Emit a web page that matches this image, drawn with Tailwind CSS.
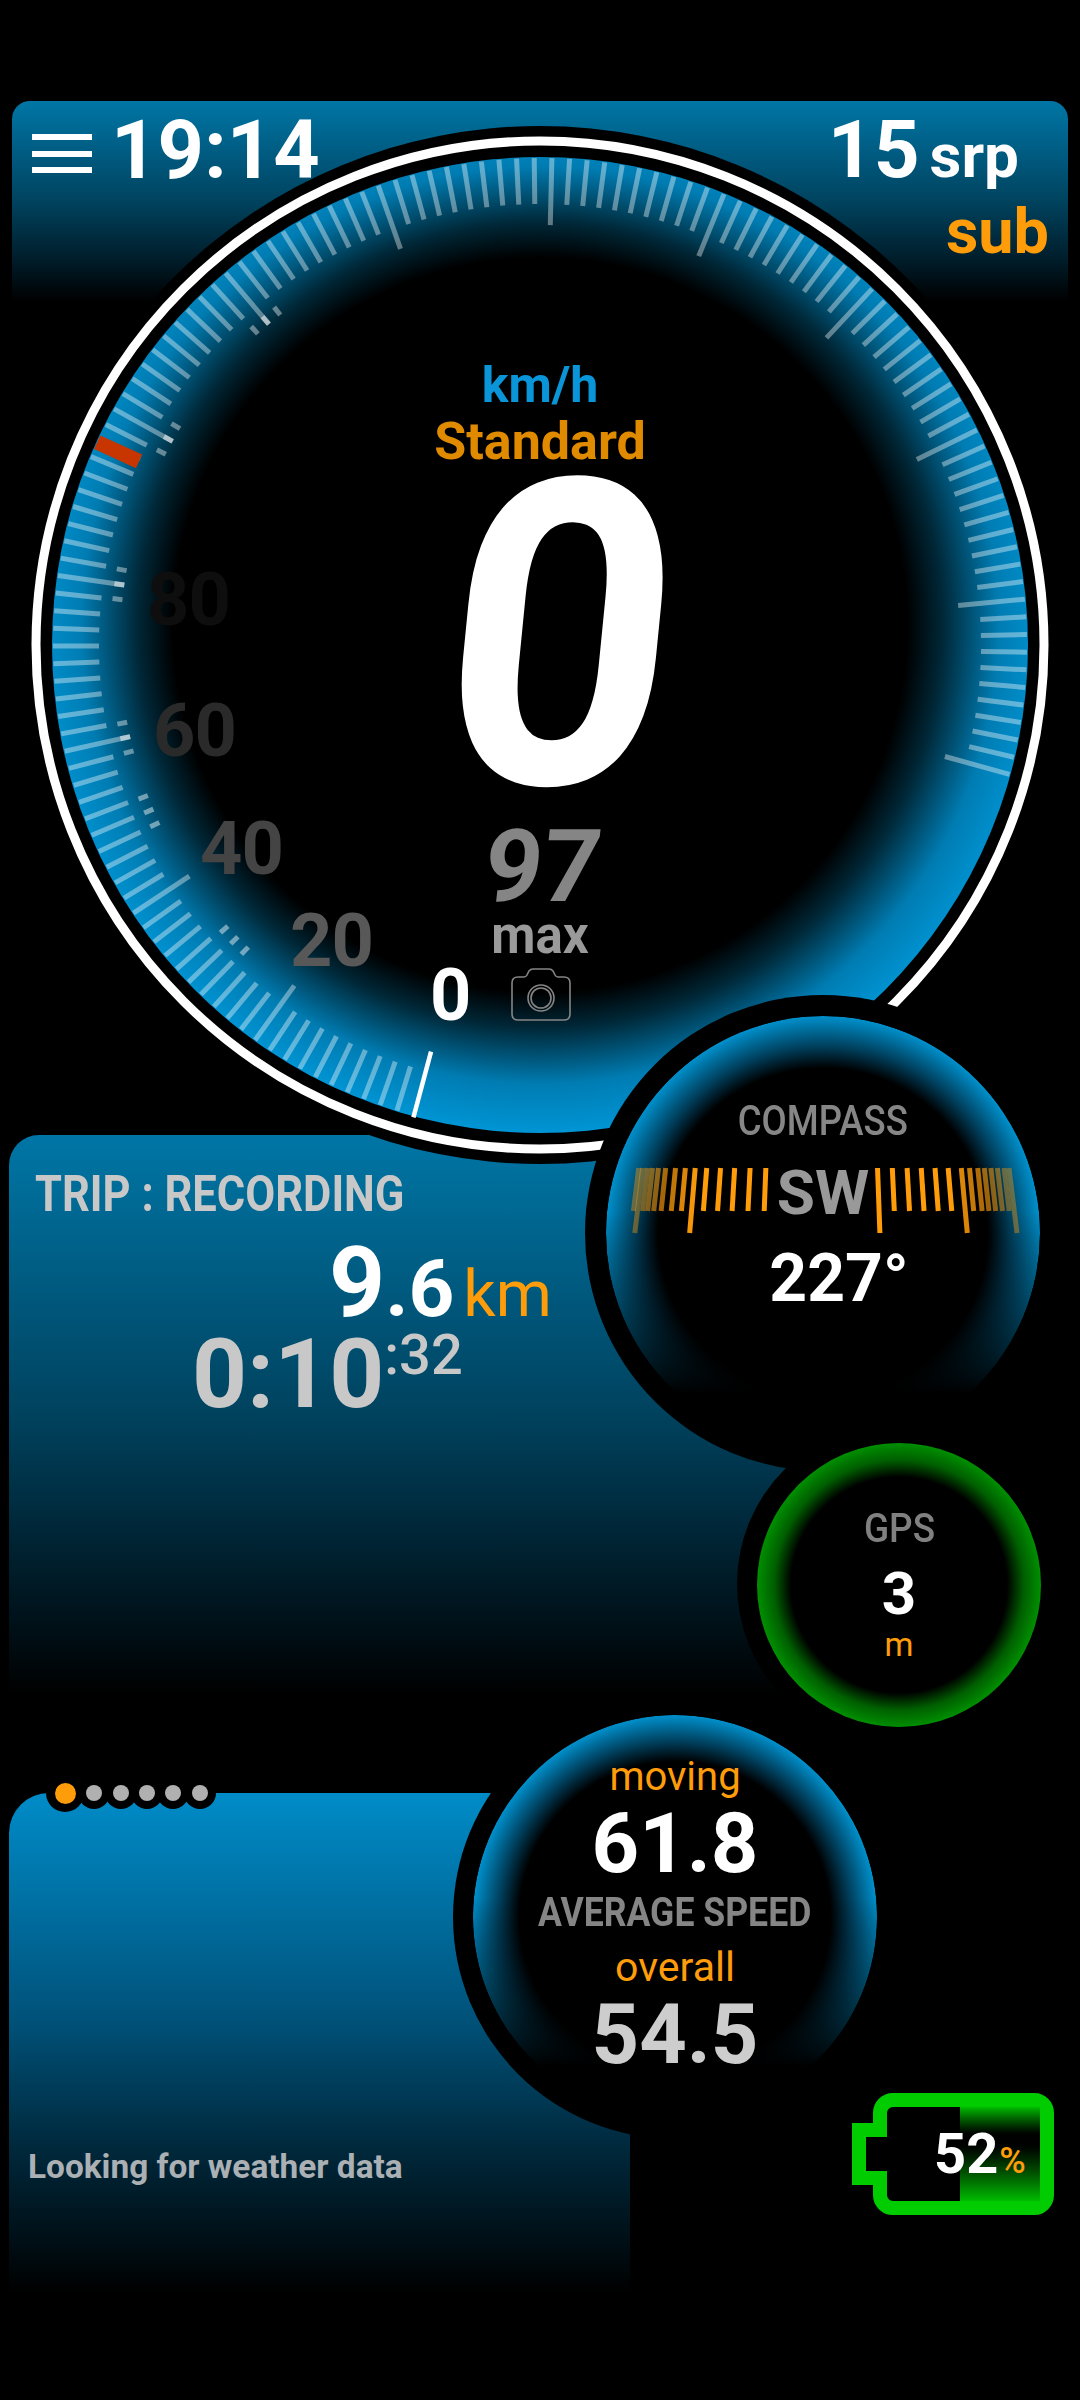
<!DOCTYPE html>
<html lang="en">
<head>
    <meta charset="UTF-8">
    <meta name="viewport" content="width=device-width, initial-scale=1.0">
    <title>Speedometer</title>
    <script src="https://cdn.jsdelivr.net/npm/@tailwindcss/browser@4"></script>
</head>
<body class="bg-black">
<div class="relative w-[1080px] h-[2400px] bg-black overflow-hidden [font-family:Roboto,sans-serif] leading-none">

    <!-- top bar -->
    <div class="absolute left-[12px] top-[101px] w-[1056px] h-[200px] rounded-t-[18px] bg-[linear-gradient(#0076a6,#00435f_50%,#001c29_80%,#000)] flex justify-between">
        <div class="flex items-start pl-[20px] pt-[9px]">
            <div class="flex flex-col gap-[10.5px] w-[60px] mt-[24px]">
                <div class="h-[6px] bg-white"></div>
                <div class="h-[6px] bg-white"></div>
                <div class="h-[6px] bg-white"></div>
            </div>
            <span class="ml-[19px] text-[81px] font-bold text-white">19:14</span>
        </div>
        <div class="flex flex-col items-end pr-[19px] pt-[9px]">
            <div class="flex items-baseline gap-[10px] mr-[30px] text-white font-bold">
                <span class="text-[80px]">15</span>
                <span class="text-[62px]">srp</span>
            </div>
            <span class="mt-[10px] text-[63px] font-bold text-[#ff9c0a]">sub</span>
        </div>
    </div>

    <!-- trip panel -->
    <div class="absolute left-[9px] top-[1135px] w-[860px] h-[560px] rounded-t-[30px] bg-[linear-gradient(#0076a6,#00425e_50%,#001a26_80%,#000)] pl-[26px] pt-[34px]">
        <div class="text-[50px] font-bold text-[#c8c8c8] origin-left scale-x-[.87] whitespace-nowrap">TRIP : RECORDING</div>
        <div class="flex items-baseline ml-[294px] mt-[15px] font-bold text-white">
            <span class="text-[98px]">9</span><span class="text-[80px]">.6</span>
            <span class="ml-[9px] text-[64px] font-normal text-[#ff9c0a]">km</span>
        </div>
        <div class="flex items-start ml-[157px] -mt-[6px] text-[#c8c8c8] font-bold">
            <span class="text-[96px]">0:10</span>
            <span class="text-[56px] font-medium mt-[1px]">:32</span>
        </div>
    </div>

    <!-- main gauge -->
    <svg id="gauge" class="absolute left-0 top-0" width="1080" height="1200" viewBox="0 0 1080 1200">
        <defs>
            <radialGradient id="rim" gradientUnits="userSpaceOnUse" cx="540" cy="625" r="510">
                <stop offset="0.72" stop-color="#000"/>
                <stop offset="0.79" stop-color="#002838"/>
                <stop offset="0.9" stop-color="#007cb2"/>
                <stop offset="1" stop-color="#0096d6"/>
            </radialGradient>
        </defs>
        <circle cx="540" cy="645" r="519" fill="#000"/>
        <circle cx="540" cy="645" r="504" fill="none" stroke="#fff" stroke-width="9"/>
        <circle cx="540" cy="645" r="488" fill="url(#rim)"/>
        <g id="ticks"></g>
    </svg>

    <!-- dial numbers -->
    <span class="absolute left-[290px] top-[904px] text-[74px] font-bold tracking-[-1px] text-[#585858]">20</span>
    <span class="absolute left-[200px] top-[812px] text-[74px] font-bold tracking-[-1px] text-[#444444]">40</span>
    <span class="absolute left-[153px] top-[694px] text-[74px] font-bold tracking-[-1px] text-[#2a2a2a]">60</span>
    <span class="absolute left-[147px] top-[563px] text-[74px] font-bold tracking-[-1px] text-[#0e0e0e]">80</span>

    <div class="absolute left-[240px] top-[360px] w-[600px] flex flex-col items-center font-bold">
        <span class="text-[50px] text-[#0a95d8]">km/h</span>
        <span class="mt-[6px] text-[52px] text-[#e08a00]">Standard</span>
        <span class="-mt-[44px] ml-[42px] text-[427px] text-white scale-x-[.94] -skew-x-[6deg]">0</span>
        <span class="-mt-[35px] ml-[6px] text-[101px] text-[#858585] -skew-x-[6deg]">97</span>
        <span class="-mt-[7px] text-[51px] text-[#9a9a9a]">max</span>
    </div>
    <div class="absolute left-[430px] top-[960px] flex items-start">
        <span class="text-[72px] font-bold text-white">0</span>
        <svg class="ml-[40px] mt-[8px]" width="60" height="54" viewBox="0 0 60 54" fill="none" stroke="#858585" stroke-width="1.6">
            <path d="M7 9H13Q15 9 16 7L18 3Q19.5 1 22 1H38Q40.5 1 42 3L44 7Q45 9 47 9H53Q59 9 59 15V46Q59 52 53 52H7Q1 52 1 46V15Q1 9 7 9Z"/>
            <circle cx="30" cy="30" r="13"/>
            <circle cx="30" cy="30" r="10"/>
        </svg>
    </div>

    <!-- compass -->
    <div class="absolute left-[585px] top-[995px] w-[476px] h-[476px] rounded-full bg-black"></div>
    <div class="absolute left-[606px] top-[1016px] w-[434px] h-[434px] rounded-full bg-[radial-gradient(closest-side,#000_76%,#003f5c_86%,#0090cc_100%)] [mask-image:linear-gradient(to_bottom,#000_45%,transparent_87%)]"></div>
    <div class="absolute left-[606px] top-[1016px] w-[434px] flex flex-col items-center">
        <span class="mt-[84px] text-[42px] font-medium text-[#868686] scale-x-[.87]">COMPASS</span>
        <span class="mt-[20px] text-[62px] font-bold text-[#999999]">SW</span>
        <span class="mt-[22px] pl-[32px] text-[66px] font-bold text-white">227°</span>
    </div>
    <svg id="tape" class="absolute left-0 top-0" width="1080" height="1300" viewBox="0 0 1080 1300"></svg>

    <!-- gps -->
    <div class="absolute left-[737px] top-[1422px] w-[324px] h-[324px] rounded-full bg-black"></div>
    <div class="absolute left-[757px] top-[1443px] w-[284px] h-[284px] rounded-full bg-[radial-gradient(closest-side,#000_76%,#005f00_88%,#008f00_100%)] flex flex-col items-center">
        <span class="mt-[65px] text-[41px] font-medium text-[#808080] scale-x-[.9]">GPS</span>
        <span class="mt-[15px] text-[60px] font-bold text-white">3</span>
        <span class="mt-[4px] text-[33px] text-[#ff9c0a]">m</span>
    </div>

    <!-- weather panel -->
    <div class="absolute left-[9px] top-[1793px] w-[621px] h-[500px] rounded-tl-[40px] bg-[linear-gradient(#008cc8,#00527a_45%,#002a3e_70%,#000)]">
        <div class="absolute left-[37px] -top-[19px] flex items-center -space-x-[5.7px]">
            <div class="flex items-center justify-center w-[38px] h-[38px] rounded-full bg-black">
                <div class="w-[21px] h-[21px] rounded-full bg-[#ff9c0a]"></div>
            </div>
            <div class="flex items-center justify-center w-[32px] h-[32px] rounded-full bg-black"><div class="w-[16px] h-[16px] rounded-full bg-[#b0b0b0]"></div></div>
            <div class="flex items-center justify-center w-[32px] h-[32px] rounded-full bg-black"><div class="w-[16px] h-[16px] rounded-full bg-[#b0b0b0]"></div></div>
            <div class="flex items-center justify-center w-[32px] h-[32px] rounded-full bg-black"><div class="w-[16px] h-[16px] rounded-full bg-[#b0b0b0]"></div></div>
            <div class="flex items-center justify-center w-[32px] h-[32px] rounded-full bg-black"><div class="w-[16px] h-[16px] rounded-full bg-[#b0b0b0]"></div></div>
            <div class="flex items-center justify-center w-[32px] h-[32px] rounded-full bg-black"><div class="w-[16px] h-[16px] rounded-full bg-[#b0b0b0]"></div></div>
        </div>
        <div class="absolute left-[19px] top-[357px] text-[33.4px] font-bold text-[#aab0b3] whitespace-nowrap">Looking for weather data</div>
    </div>

    <!-- average speed -->
    <div class="absolute left-[453px] top-[1695px] w-[444px] h-[444px] rounded-full bg-black"></div>
    <div class="absolute left-[473px] top-[1715px] w-[404px] h-[404px] rounded-full bg-[radial-gradient(closest-side,#000_77%,#003f5c_87%,#0090cc_100%)] [mask-image:linear-gradient(to_bottom,#000_45%,transparent_87%)]"></div>
    <div class="absolute left-[473px] top-[1715px] w-[404px] flex flex-col items-center">
        <span class="mt-[42px] text-[40px] text-[#ff9c0a]">moving</span>
        <span class="mt-[5px] text-[83px] font-bold text-white">61.8</span>
        <span class="mt-[8px] text-[40px] font-bold text-[#858585] scale-x-[.89] whitespace-nowrap">AVERAGE SPEED</span>
        <span class="mt-[14px] text-[41px] text-[#ff9c0a]">overall</span>
        <span class="mt-[5px] text-[83px] font-bold text-[#cdcdcd]">54.5</span>
    </div>

    <!-- battery -->
    <div class="absolute left-[852px] top-[2093px] flex items-center">
        <div class="w-[21px] h-[62px] border-[14px] border-r-0 border-[#00cc00]"></div>
        <div class="relative w-[181px] h-[122px] rounded-[20px] border-[14px] border-[#00cc00]">
            <div class="absolute -left-[14px] top-[30px] w-[14px] h-[34px] bg-black"></div>
            <div class="absolute left-[73px] right-0 top-0 bottom-0 bg-linear-to-b from-[#00bb00] via-black via-[33%] to-[#00bb00]"></div>
            <div class="absolute left-[47px] top-[19px] flex items-baseline">
                <span class="text-[56px] font-bold text-white">52</span>
                <span class="ml-[1px] text-[36px] font-medium text-[#ff9c0a]">%</span>
            </div>
        </div>
    </div>
</div>

<script>
    // dial ticks, angles run clockwise from straight down
    const NS = 'http://www.w3.org/2000/svg';
    const cx = 540, cy = 645;
    const ticks = document.getElementById('ticks');

    function line(parent, x1, y1, x2, y2, color, width, opacity) {
        const l = document.createElementNS(NS, 'line');
        l.setAttribute('x1', x1); l.setAttribute('y1', y1);
        l.setAttribute('x2', x2); l.setAttribute('y2', y2);
        l.setAttribute('stroke', color);
        l.setAttribute('stroke-width', width);
        l.setAttribute('stroke-opacity', opacity);
        parent.appendChild(l);
    }

    function radial(a, r1, r2, color, width, opacity) {
        const t = a * Math.PI / 180;
        const s = Math.sin(t), c = Math.cos(t);
        line(ticks, cx - r1 * s, cy + r1 * c, cx - r2 * s, cy + r2 * c, color, width, opacity);
    }

    for (let k = 1; k <= 130; k++) {
        const inner = k % 10 === 0 ? 420 : 441;
        radial(15 + 2.08 * k, inner, 487, '#fff', 5, 0.38);
    }
    radial(15, 421, 489, '#fff', 4.5, 1);
    radial(114.6, 441, 487, '#c73500', 15, 1);

    // marks for the recorded speeds
    [77.4, 98.2, 119, 139.8].forEach(function(a) {
        radial(a, 420, 430, '#fff', 5, 0.5);
        radial(a - 2, 420, 430, '#fff', 5, 0.4);
        radial(a + 2, 420, 430, '#fff', 5, 0.4);
    });
    [46, 67].forEach(function(a) {
        radial(a, 420, 430, '#fff', 5, 0.45);
        radial(a - 2, 420, 430, '#fff', 5, 0.45);
        radial(a + 2, 420, 430, '#fff', 5, 0.45);
    });

    // compass tape, x values taken along the middle of the bars
    const tape = document.getElementById('tape');
    const bars = [
        [585], [537], [490], [447], [405], [370, 1], [340], [310], [280], [258], [240], [225], [210, 1], [198],
        [925, 1], [970], [1015], [1058], [1100], [1140], [1180, 1], [1205], [1230], [1250], [1270], [1290], [1310], [1325, 1]
    ];
    bars.forEach(function(b) {
        const xm = 570 + b[0] / 3;
        const d = Math.abs(b[0] - 760);
        const slope = (b[0] - 760) * 0.00022;
        const bottom = b[1] ? 1233 : 1211;
        const opacity = d < 380 ? 1 : Math.max(0.4, 1 - (d - 380) / 200 * 0.7);
        line(tape, xm + slope * (1168 - 1190), 1168, xm + slope * (bottom - 1190), bottom, '#ff9c0a', 5, opacity);
    });
</script>
</body>
</html>
